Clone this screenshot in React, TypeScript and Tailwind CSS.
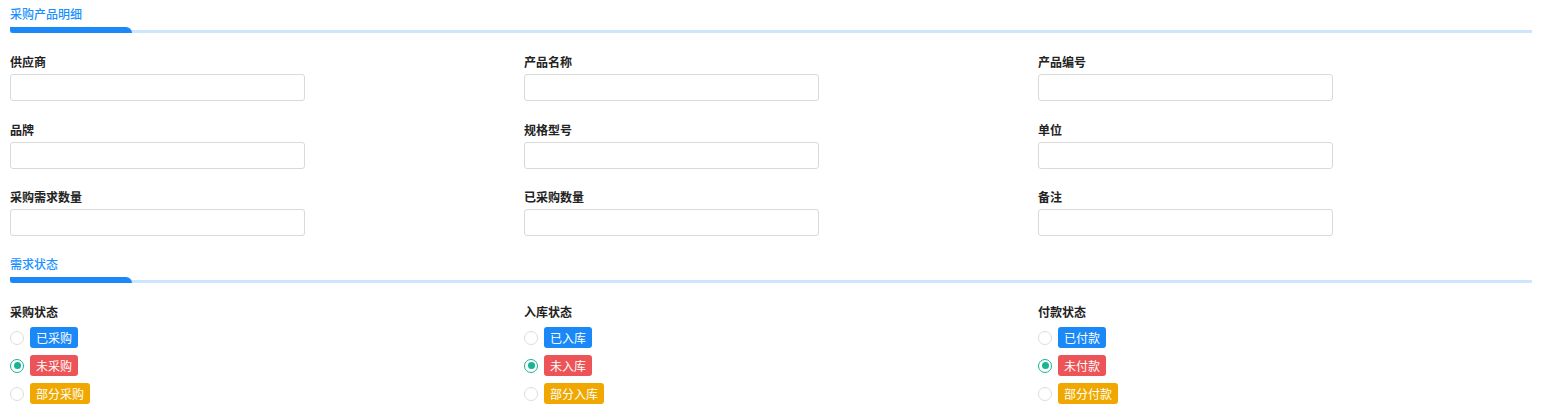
import React from "react";

const font = { fontFamily: '"Noto Sans CJK SC", "Noto Sans", sans-serif' };

const fields = [
  "供应商",
  "产品名称",
  "产品编号",
  "品牌",
  "规格型号",
  "单位",
  "采购需求数量",
  "已采购数量",
  "备注",
];

const statuses = [
  { label: "采购状态", word: "采购" },
  { label: "入库状态", word: "入库" },
  { label: "付款状态", word: "付款" },
];

function SectionTitle({ title }: { title: string }) {
  return (
    <div className="pt-[6px]">
      <div className="mb-[5px] text-[12px] font-medium leading-[16px] text-[#1890ff]">{title}</div>
      <div className="relative h-[6px]">
        <div className="absolute bottom-0 left-0 right-0 h-[3px] bg-[#cfe5fd]" />
        <div className="absolute left-0 top-0 h-[6px] w-[122px] rounded-bl-[3px] rounded-tr-[6px] bg-[#1a88f7]" />
      </div>
    </div>
  );
}

function Radio({ checked }: { checked?: boolean }) {
  return checked ? (
    <span className="flex h-[14px] w-[14px] items-center justify-center rounded-full border border-[#1ab394] bg-white">
      <span className="h-[7px] w-[7px] rounded-full bg-[#1ab394]" />
    </span>
  ) : (
    <span className="h-[14px] w-[14px] rounded-full border border-[#dddddd] bg-white" />
  );
}

export default function App() {
  return (
    <div className="w-[1546px] bg-white pl-[10px] pr-[14px] text-[#222]" style={font}>
      <SectionTitle title="采购产品明细" />

      <div className="mt-[21px] grid grid-cols-3 gap-x-[20px] gap-y-[20px]">
        {fields.map((f, i) => (
          <div key={f} className={i >= 3 && i < 6 ? "mt-[1px]" : ""}>
            <div className="mb-[4px] text-[12px] font-bold leading-[16px] text-[#222]">{f}</div>
            <input className="block h-[27px] w-[295px] rounded-[3px] border border-[#d9d9d9] bg-white outline-none" />
          </div>
        ))}
      </div>

      <div className="mt-[14px]">
        <SectionTitle title="需求状态" />
      </div>

      <div className="mt-[21px] grid grid-cols-3 gap-x-[20px] pb-[10px]">
        {statuses.map((s) => (
          <div key={s.label}>
            <div className="mb-[7px] text-[12px] font-bold leading-[16px] text-[#222]">{s.label}</div>
            <div className="flex flex-col gap-[7px]">
              <div className="flex items-center gap-[6px]">
                <Radio />
                <span className="rounded-[3px] bg-[#1a88f7] px-[6px] text-[12px] leading-[21px] text-white">
                  已{s.word}
                </span>
              </div>
              <div className="flex items-center gap-[6px]">
                <Radio checked />
                <span className="rounded-[3px] bg-[#ec5457] px-[6px] text-[12px] leading-[21px] text-white">
                  未{s.word}
                </span>
              </div>
              <div className="flex items-center gap-[6px]">
                <Radio />
                <span className="rounded-[3px] bg-[#f0a800] px-[6px] text-[12px] leading-[21px] text-white">
                  部分{s.word}
                </span>
              </div>
            </div>
          </div>
        ))}
      </div>
    </div>
  );
}
